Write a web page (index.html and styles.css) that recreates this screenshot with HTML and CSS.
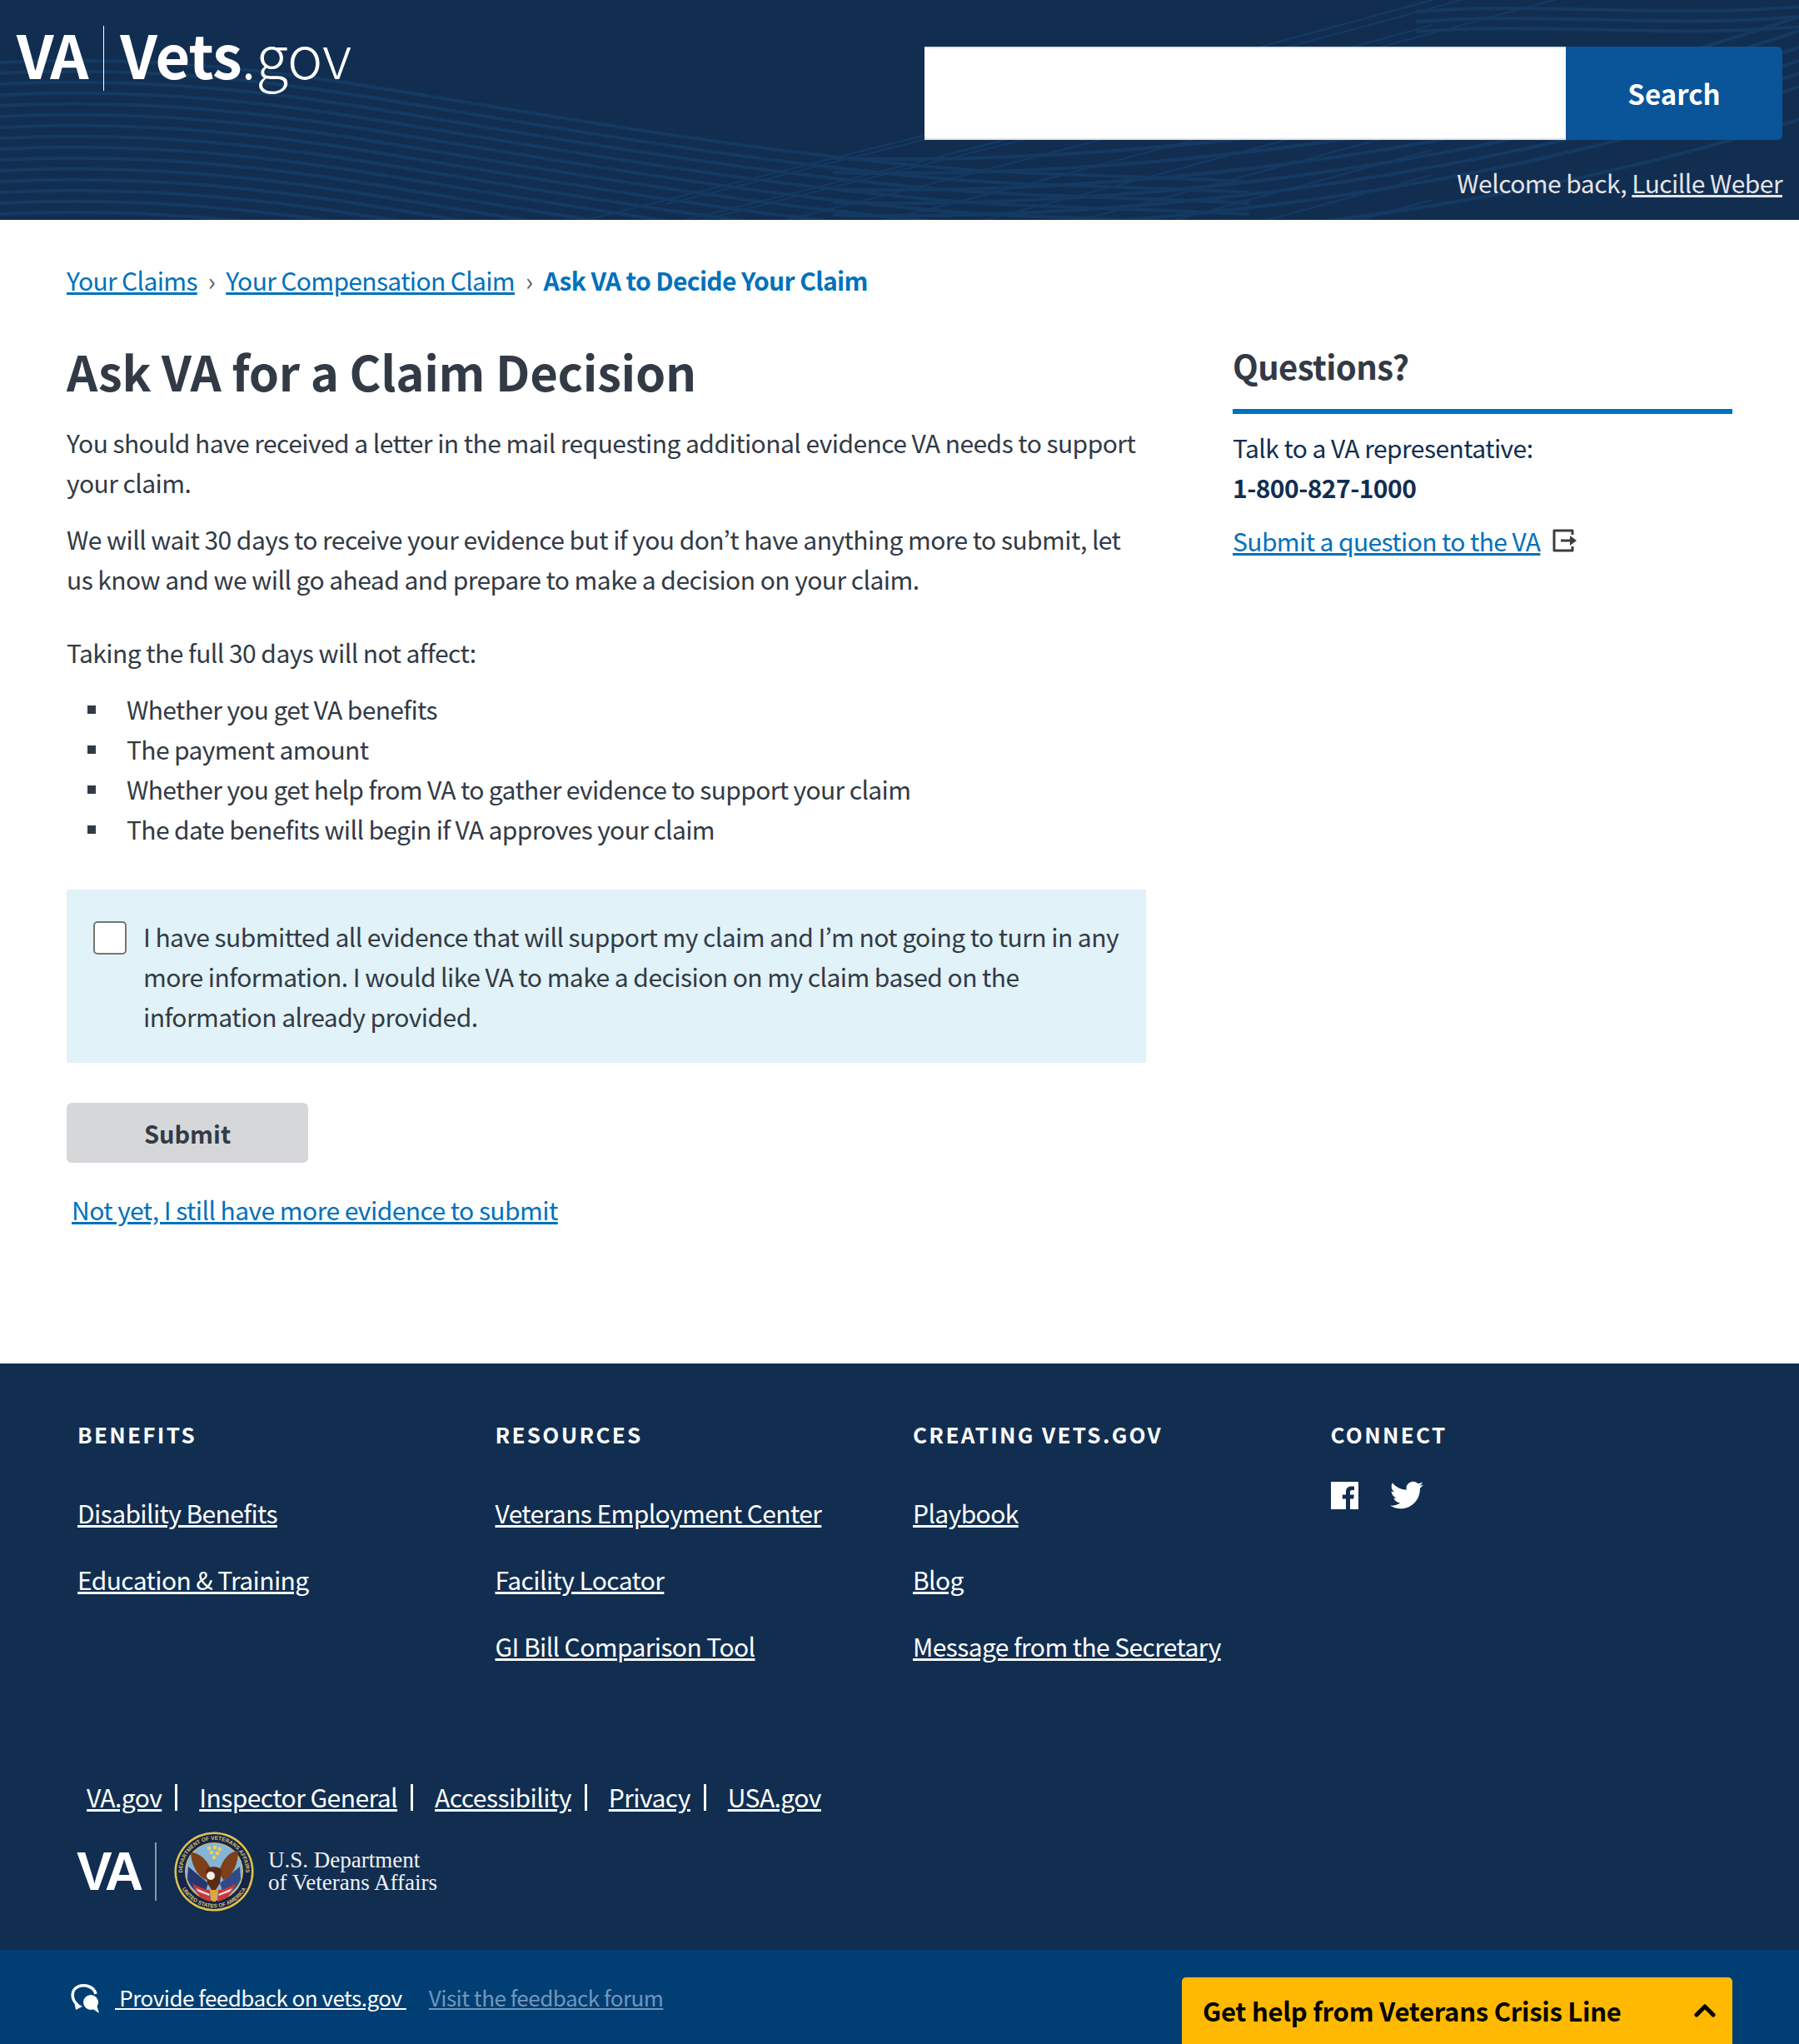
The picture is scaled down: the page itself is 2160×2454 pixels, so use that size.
FILE: index.html
```html
<!DOCTYPE html>
<html lang="en">
<head>
<meta charset="utf-8">
<title>Ask VA for a Claim Decision</title>
<link rel="stylesheet" href="styles.css">
</head>
<body>
<header class="site-header">
  <svg class="waves" viewBox="0 0 2160 264" preserveAspectRatio="none" aria-hidden="true">
    <defs>
      <path id="wl" d="M0 75C140 68 280 78 420 100S800 165 1000 188 1200 205 1500 218"/>
      <path id="wh" d="M600 290L1100 165C1300 115 1500 60 1720 0"/>
      <path id="wa" d="M1000 190C1300 198 1750 160 2160 20"/>
      <path id="wt" d="M1700 14C1850 2 2000 22 2160 8"/>
    </defs>
    <g class="wave-left">
      <use href="#wl"/><use href="#wl" y="13"/><use href="#wl" y="26"/><use href="#wl" y="39"/><use href="#wl" y="52"/><use href="#wl" y="65"/><use href="#wl" y="78"/><use href="#wl" y="91"/><use href="#wl" y="104"/><use href="#wl" y="117"/><use href="#wl" y="130"/><use href="#wl" y="143"/><use href="#wl" y="156"/><use href="#wl" y="169"/><use href="#wl" y="182"/><use href="#wl" y="195"/>
    </g>
    <g class="wave-hatch">
      <use href="#wh"/><use href="#wh" y="30"/><use href="#wh" y="60"/><use href="#wh" y="90"/><use href="#wh" y="120"/><use href="#wh" y="150"/><use href="#wh" y="180"/><use href="#wh" y="210"/><use href="#wh" y="240"/><use href="#wh" y="270"/><use href="#wh" y="300"/><use href="#wh" y="330"/><use href="#wh" x="200" y="-15"/><use href="#wh" x="200" y="-45"/>
    </g>
    <g class="wave-arc">
      <use href="#wa"/><use href="#wa" y="17"/><use href="#wa" y="37"/><use href="#wa" y="53"/><use href="#wa" y="68"/><use href="#wa" y="84"/><use href="#wa" y="104" x="60"/>
      <use href="#wt"/><use href="#wt" y="12"/><use href="#wt" y="24"/>
    </g>
  </svg>
  <a class="logo" href="#"><span class="logo-va">VA</span><span class="logo-bar"></span><span class="logo-vets">Vets</span><span class="logo-gov">.gov</span></a>
  <div class="header-right">
    <form class="search"><input class="search-input" type="text" aria-label="Search"><button class="search-btn" type="button">Search</button></form>
    <p class="welcome">Welcome back, <a href="#">Lucille Weber</a></p>
  </div>
</header>

<main class="page">
  <nav class="crumbs"><a href="#">Your Claims</a><span class="sep">›</span><a href="#">Your Compensation Claim</a><span class="sep">›</span><a class="current" href="#">Ask VA to Decide Your Claim</a></nav>
  <div class="columns">
    <section class="content">
      <h1>Ask VA for a Claim Decision</h1>
      <p>You should have received a letter in the mail requesting additional evidence VA needs to support your claim.</p>
      <p>We will wait 30 days to receive your evidence but if you don’t have anything more to submit, let us know and we will go ahead and prepare to make a decision on your claim.</p>
      <p class="lead">Taking the full 30 days will not affect:</p>
      <ul class="squares">
        <li>Whether you get VA benefits</li>
        <li>The payment amount</li>
        <li>Whether you get help from VA to gather evidence to support your claim</li>
        <li>The date benefits will begin if VA approves your claim</li>
      </ul>
      <label class="confirm"><span class="box"></span><span class="confirm-text">I have submitted all evidence that will support my claim and I’m not going to turn in any more information. I would like VA to make a decision on my claim based on the information already provided.</span></label>
      <button class="submit" type="button">Submit</button>
      <a class="not-yet" href="#">Not yet, I still have more evidence to submit</a>
    </section>
    <aside class="side">
      <h2>Questions?</h2>
      <p>Talk to a VA representative:</p>
      <p class="phone">1-800-827-1000</p>
      <p class="ask"><a href="#">Submit a question to the VA</a>
        <svg class="ext" viewBox="0 0 30 28" aria-hidden="true"><path d="M24 7V2H2v24h22v-5" fill="none" stroke="#3d3d3d" stroke-width="3" stroke-linejoin="round"/><path d="M10 12.500h11V8l8 6-8 6v-4.500H10z" fill="#3d3d3d"/></svg>
      </p>
    </aside>
  </div>
</main>

<footer class="footer">
  <div class="foot-cols">
    <div class="foot-col"><h4>BENEFITS</h4><a href="#">Disability Benefits</a><a href="#">Education &amp; Training</a></div>
    <div class="foot-col"><h4>RESOURCES</h4><a href="#">Veterans Employment Center</a><a href="#">Facility Locator</a><a href="#">GI Bill Comparison Tool</a></div>
    <div class="foot-col"><h4>CREATING VETS.GOV</h4><a href="#">Playbook</a><a href="#">Blog</a><a href="#">Message from the Secretary</a></div>
    <div class="foot-col"><h4>CONNECT</h4>
      <div class="social">
        <svg class="fb" viewBox="0 0 33 33" aria-hidden="true"><path fill="#fff" d="M0 0h33v33H23V20.500h4.200l.6-4.900H23v-3.100c0-1.400.4-2.400 2.400-2.400H28V5.700c-.5 0-2-.2-3.700-.2-3.700 0-6.300 2.300-6.300 6.400v3.700h-4.200v4.900H18V33H0z"/></svg>
        <svg class="tw" viewBox="0 0 512 512" aria-hidden="true"><path fill="#fff" d="M459.370 151.716c.325 4.548.325 9.097.325 13.645 0 138.720-105.583 298.558-298.558 298.558-59.452 0-114.680-17.219-161.137-47.106 8.447.974 16.568 1.299 25.340 1.299 49.055 0 94.213-16.568 130.274-44.832-46.132-.975-84.792-31.188-98.112-72.772 6.498.974 12.995 1.624 19.818 1.624 9.421 0 18.843-1.300 27.614-3.573-48.081-9.747-84.143-51.980-84.143-102.985v-1.299c13.969 7.797 30.214 12.670 47.431 13.319-28.264-18.843-46.781-51.005-46.781-87.391 0-19.492 5.197-37.360 14.294-52.954 51.655 63.675 129.300 105.258 216.365 109.807-1.624-7.797-2.599-15.918-2.599-24.040 0-57.828 46.782-104.934 104.934-104.934 30.213 0 57.502 12.670 76.670 33.137 23.715-4.548 46.456-13.320 66.599-25.340-7.798 24.366-24.366 44.833-46.132 57.827 21.117-2.273 41.584-8.122 60.426-16.243-14.292 20.791-32.161 39.308-52.628 54.253z"/></svg>
      </div>
    </div>
  </div>
  <nav class="foot-links"><a href="#">VA.gov</a><a href="#">Inspector General</a><a href="#">Accessibility</a><a href="#">Privacy</a><a href="#">USA.gov</a></nav>
  <div class="dept">
    <span class="dept-va">VA</span><span class="dept-bar"></span>
    <svg class="seal" viewBox="0 0 96 96" aria-hidden="true">
      <defs><path id="ring-top" d="M13.600 64A38 38 0 1 1 82.400 64"/><path id="ring-bot" d="M5.200 55.600A43.500 43.500 0 0 0 90.800 55.600"/></defs>
      <circle cx="48" cy="48" r="47.500" fill="#e3c24c"/><circle cx="48" cy="48" r="45" fill="#16244a"/><circle cx="48" cy="48" r="35" fill="#e3c24c"/><circle cx="48" cy="48" r="34" fill="#86b4d6"/>
      <text class="seal-ring"><textPath href="#ring-top" startOffset="50%" text-anchor="middle">DEPARTMENT OF VETERANS AFFAIRS</textPath></text>
      <text class="seal-ring"><textPath href="#ring-bot" startOffset="50%" text-anchor="middle">UNITED STATES OF AMERICA</textPath></text>
      <g fill="#f2d04f"><circle cx="42" cy="20" r="2.200"/><circle cx="49" cy="19" r="2.200"/><circle cx="55" cy="21" r="2.200"/><circle cx="45" cy="25" r="2.200"/><circle cx="52" cy="26" r="2.200"/><circle cx="48" cy="31" r="2.200"/></g>
      <path fill="#27376d" d="M17 42l24 20-5 15c-9-3-17-11-20-20z"/>
      <path fill="#2f4a86" d="M79 42L55 62l5 15c9-3 17-11 20-20z"/>
      <path fill="#c9363c" d="M22 62c6 4 15 8 21 8l1 14c-9-1-18-8-22-22zM74 62c-6 4-15 8-21 8l-1 14c9-1 18-8 22-22z"/>
      <path fill="#e8e2dc" d="M26 68l17 7-1 2-13-5zM70 68l-17 7 1 2 13-5z"/>
      <path fill="#7d4019" d="M20 25c10 0 22 10 25 24l-6 9C28 54 21 40 20 25zM77 23c-11 1-19 10-23 26l5 9c11-4 18-18 18-35z"/>
      <path fill="#5a2c14" d="M38 46c3-5 16-5 19 0l-2 16-5 8h-5l-5-8z"/>
      <circle cx="44" cy="53" r="5" fill="#f3efe7"/>
      <path fill="#e0a92e" d="M43 70h9l-2 14h-4z"/>
    </svg>
    <span class="dept-name">U.S. Department<br>of Veterans Affairs</span>
  </div>
</footer>

<div class="feedback">
  <div class="fb-left">
    <svg class="chat" viewBox="0 0 36 35" aria-hidden="true"><path d="M9 25C1 18 1 7 10 3c8-3 19 0 21 9" fill="none" stroke="#fff" stroke-width="3.500"/><path d="M5 21l2 10 8-4z" fill="#fff"/><circle cx="25" cy="22" r="9" fill="#fff"/><path d="M26 29l9 6-3-10z" fill="#fff"/></svg>
    <a class="fb-main" href="#">&nbsp;Provide feedback on vets.gov&nbsp;</a>
    <a class="fb-forum" href="#">Visit the feedback forum</a>
  </div>
  <button class="crisis" type="button"><span>Get help from Veterans Crisis Line</span>
    <svg class="chev" viewBox="0 0 26 16" aria-hidden="true"><path d="M3 13l10-10 10 10" fill="none" stroke="#000" stroke-width="5" stroke-linecap="round" stroke-linejoin="round"/></svg>
  </button>
</div>
</body>
</html>
```
FILE: styles.css
```css
* { box-sizing: border-box; }
html, body { margin: 0; padding: 0; }
body { font-family: "Noto Sans CJK JP", "Lato", sans-serif; font-size: 30px; letter-spacing: -.55px; line-height: 48px; color: #323a45; background: #fff; width: 2160px; }
a { color: #0071bb; }
p { margin: 0; }

.site-header { position: relative; height: 264px; background: #112e51; display: flex; justify-content: space-between; overflow: hidden; }
.waves { position: absolute; left: 0; top: 0; width: 2160px; height: 264px; }
.waves g { fill: none; stroke: #153a61; }
.wave-left { stroke-width: 4; }
.wave-hatch { stroke-width: 2; }
.wave-arc { stroke-width: 4; }
.logo { position: relative; display: flex; align-items: flex-start; color: #fff; text-decoration: none; padding: 28px 0 0 20px; height: 130px; font-size: 72px; line-height: 72px; letter-spacing: -.5px; }
.logo-va { font-weight: 700; letter-spacing: -3px; }
.logo-bar { width: 1px; height: 78px; background: #fff; margin: 3px 19px 0 21px; }
.logo-vets { font-weight: 700; letter-spacing: -1px; }
.logo-gov { font-weight: 300; letter-spacing: -.5px; }
.header-right { position: relative; padding: 56px 20px 0 0; display: flex; flex-direction: column; align-items: flex-end; }
.search { display: flex; height: 112px; }
.search-input { width: 770px; height: 112px; border: 0; border-top: 2px solid #e2e2e6; border-bottom: 2px solid #e2e2e6; background: #fff; padding: 0; }
.search-btn { width: 260px; height: 112px; border: 0; background: #0a5499; color: #fff; font: 700 33px/48px "Noto Sans CJK JP", sans-serif; border-radius: 0 6px 6px 0; padding: 0; }
.welcome { color: #e4e4e8; margin-top: 27px; }
.welcome a { color: #e4e4e8; }

.page { padding: 48px 80px 0; height: 1373px; }
.crumbs { display: flex; align-items: center; height: 48px; letter-spacing: -.65px; }
.crumbs .sep { margin: 0 13px; color: #5b616b; }
.crumbs .current { font-weight: 700; text-decoration: none; }
.columns { display: flex; gap: 104px; margin-top: 47px; }
.content { width: 1296px; }
h1 { margin: 0 0 24px; font-size: 58px; line-height: 76px; font-weight: 700; letter-spacing: -.3px; }
.content p { margin-bottom: 20px; }
.content p.lead { margin: 40px 0 20px; }
.squares { list-style: none; margin: 0 0 49px; padding: 0 0 0 72px; letter-spacing: -.62px; }
.squares li { position: relative; }
.squares li::before { content: ""; position: absolute; left: -47px; top: 20px; width: 10px; height: 10px; background: #323a45; }
.confirm { display: flex; gap: 20px; background: #e1f2f8; padding: 32px 20px 32px 32px; width: 1296px; }
.box { flex: none; width: 40px; height: 40px; margin-top: 6px; background: #fff; border: 2px solid #757575; border-radius: 5px; }
.confirm-text { display: block; }
.submit { display: block; margin-top: 48px; width: 290px; height: 72px; background: #d6d7d9; color: #323a45; border: 0; border-radius: 6px; font: 700 29px/48px "Noto Sans CJK JP", sans-serif; padding: 0; }
.not-yet { display: inline-block; margin: 32px 0 0 6px; }
.side { width: 600px; color: #112e51; padding-top: 6px; }
h2 { margin: 0 0 16px; padding: 0 0 26px; font-size: 40px; line-height: 52px; font-weight: 700; letter-spacing: -.6px; color: #323a45; border-bottom: 6px solid #0071bb; }
.phone { font-weight: 700; }
.ask { margin-top: 16px; display: flex; align-items: center; gap: 15px; letter-spacing: -.6px; }
.ext { width: 30px; height: 28px; }

.footer { background: #112e51; height: 704px; padding: 61px 0 0 93px; color: #fff; }
.footer a { color: #fff; }
.foot-cols { display: flex; height: 435px; }
.foot-col { width: 501.500px; display: flex; flex-direction: column; align-items: flex-start; }
.foot-col h4 { margin: 0 0 46px; font-size: 26px; line-height: 48px; font-weight: 700; letter-spacing: 2.300px; }
.foot-col a { margin-bottom: 32px; letter-spacing: -.6px; }
.social { display: flex; align-items: center; gap: 38px; margin-top: -17px; }
.fb { width: 33px; height: 33px; }
.tw { width: 40px; height: 40px; }
.foot-links { display: flex; margin-left: 11px; }
.foot-links a { padding-right: 19px; margin-right: 26px; position: relative; }
.foot-links a:not(:last-child)::after { content: ""; position: absolute; right: 0; top: 9px; width: 3px; height: 32px; background: #fff; }
.dept { display: flex; align-items: center; height: 96px; margin-top: 18px; margin-left: -1px; }
.dept-va { font: 700 64px/70px "Liberation Sans", sans-serif; letter-spacing: -4px; width: 76px; }
.dept-bar { width: 2px; height: 70px; background: #8a99ad; margin: 0 21px 0 18px; }
.seal { width: 96px; height: 96px; }
.seal-ring { font: 700 6.500px "Liberation Sans", sans-serif; fill: #d8c26a; letter-spacing: 0; }
.dept-name { font: 400 27px/27px "Liberation Serif", serif; letter-spacing: 0; margin-left: 17px; color: #f1f1f1; }

.feedback { height: 113px; background: #003e73; display: flex; justify-content: space-between; padding: 0 80px 0 84px; }
.fb-left { display: flex; align-items: flex-start; padding-top: 33px; font-size: 26px; letter-spacing: -.5px; }
.chat { width: 36px; height: 35px; margin: 8px 0 0 0; }
.fb-main { color: #fff; margin-left: 18px; }
.fb-forum { color: #7396bb; margin-left: 27px; }
.crisis { width: 661px; height: 80px; margin-top: 33px; background: #ffb900; border: 0; border-radius: 5px 5px 0 0; display: flex; justify-content: space-between; align-items: center; padding: 0 20px 0 25px; color: #000; font: 700 31px/48px "Noto Sans CJK JP", sans-serif; letter-spacing: -.25px; }
.chev { width: 26px; height: 16px; }
```
